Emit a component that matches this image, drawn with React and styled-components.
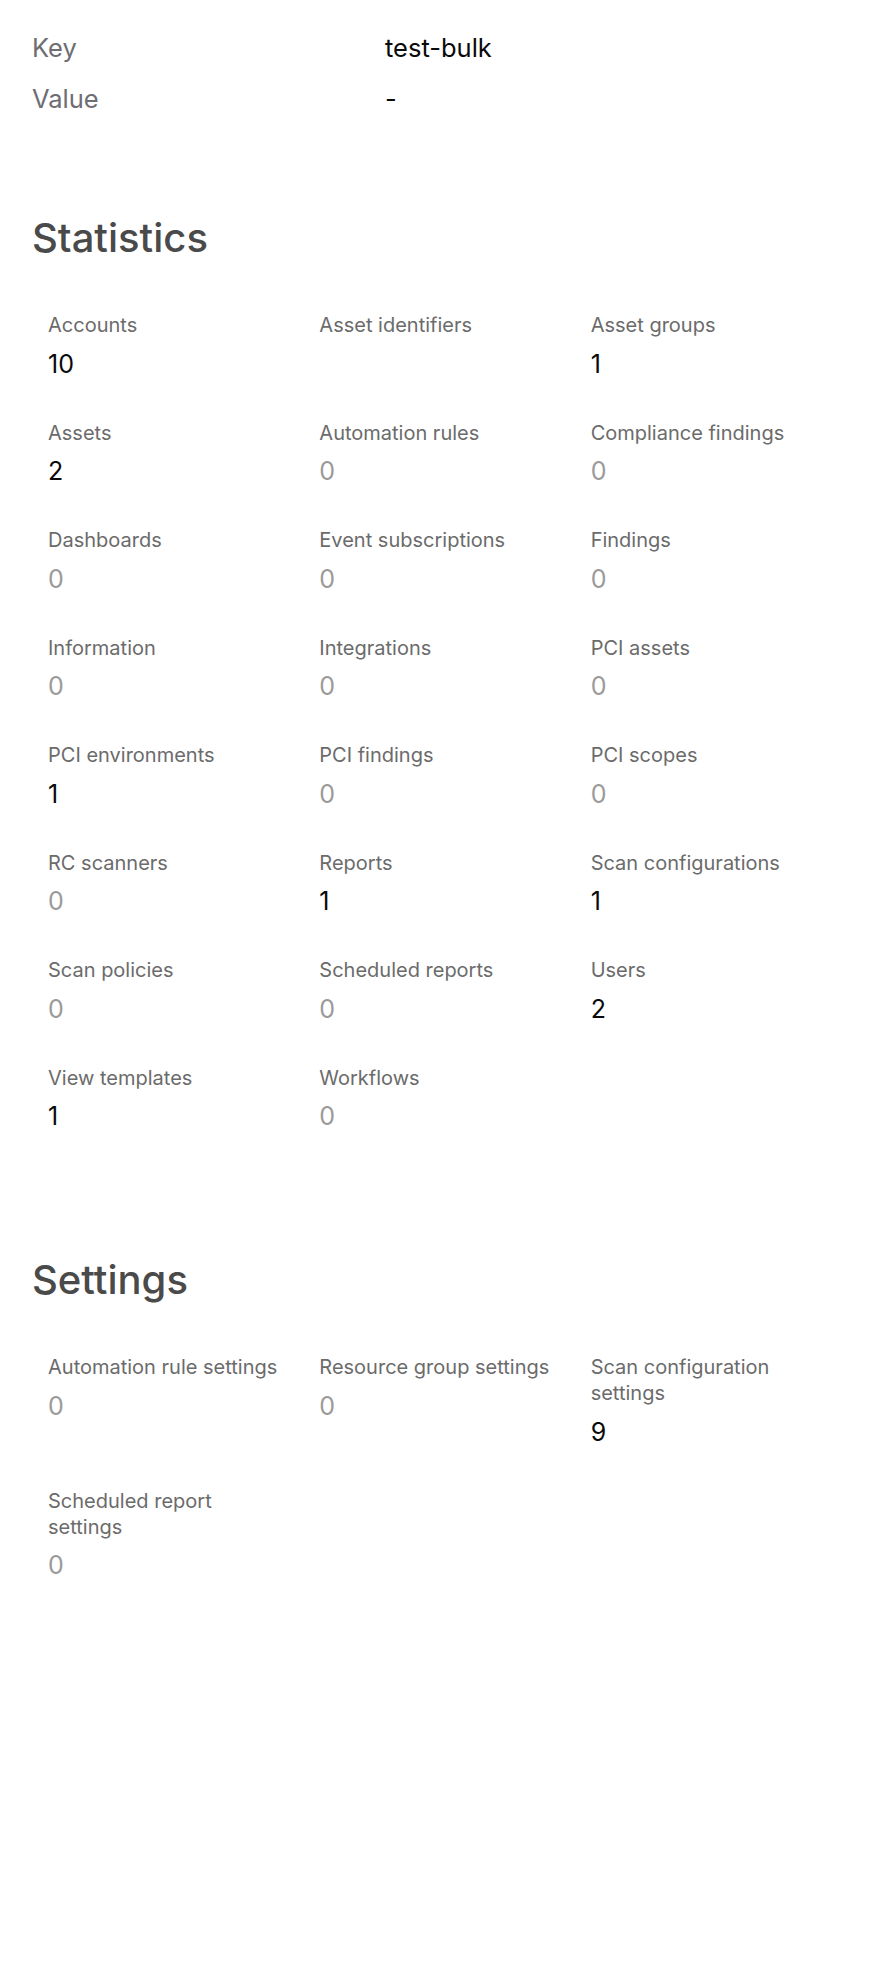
import React from "react";
import styled, { createGlobalStyle } from "styled-components";

const GlobalStyle = createGlobalStyle`
    html, body {
        margin: 0;
        padding: 0;
        background: #ffffff;
    }
    body {
        font-family: Inter, "Noto Sans", sans-serif;
        -webkit-font-smoothing: antialiased;
    }
`;

const details = [
    { key: "Key", value: "test-bulk" },
    { key: "Value", value: "-" },
];

const statistics = [
    { label: "Accounts", count: 10 },
    { label: "Asset identifiers", count: null },
    { label: "Asset groups", count: 1 },
    { label: "Assets", count: 2 },
    { label: "Automation rules", count: 0 },
    { label: "Compliance findings", count: 0 },
    { label: "Dashboards", count: 0 },
    { label: "Event subscriptions", count: 0 },
    { label: "Findings", count: 0 },
    { label: "Information", count: 0 },
    { label: "Integrations", count: 0 },
    { label: "PCI assets", count: 0 },
    { label: "PCI environments", count: 1 },
    { label: "PCI findings", count: 0 },
    { label: "PCI scopes", count: 0 },
    { label: "RC scanners", count: 0 },
    { label: "Reports", count: 1 },
    { label: "Scan configurations", count: 1 },
    { label: "Scan policies", count: 0 },
    { label: "Scheduled reports", count: 0 },
    { label: "Users", count: 2 },
    { label: "View templates", count: 1 },
    { label: "Workflows", count: 0 },
];

const settings = [
    { label: "Automation rule settings", count: 0 },
    { label: "Resource group settings", count: 0 },
    { label: "Scan configuration settings", count: 9 },
    { label: "Scheduled report settings", count: 0 },
];

const StatGrid = ({ items }) => (
    <Grid>
        {items.map((item) => (
            <Stat key={item.label}>
                <StatLabel>{item.label}</StatLabel>
                <StatValue $empty={item.count === 0}>
                    {item.count === null ? "" : item.count}
                </StatValue>
            </Stat>
        ))}
    </Grid>
);

const App = () => {
    return (
        <>
            <GlobalStyle />
            <Page>
                <DetailList>
                    {details.map((row) => (
                        <React.Fragment key={row.key}>
                            <DetailKey>{row.key}</DetailKey>
                            <DetailValue>{row.value}</DetailValue>
                        </React.Fragment>
                    ))}
                </DetailList>

                <Section>
                    <SectionTitle>Statistics</SectionTitle>
                    <StatGrid items={statistics} />
                </Section>

                <Section>
                    <SectionTitle>Settings</SectionTitle>
                    <StatGrid items={settings} />
                </Section>
            </Page>
        </>
    );
};

const Page = styled.main`
    padding: 30px 32px 32px;
    min-height: 1988px;
    box-sizing: border-box;
`;

const DetailList = styled.dl`
    display: grid;
    grid-template-columns: 353px 1fr;
    row-gap: 15px;
    margin: 0;
    font-size: 25.5px;
    line-height: 36px;
`;

const DetailKey = styled.dt`
    color: #6d6d72;
`;

const DetailValue = styled.dd`
    margin: 0;
    color: #0a0a0a;
`;

const Section = styled.section`
    margin-top: 96.5px;
    & + & {
        margin-top: 107.5px;
    }
`;

const SectionTitle = styled.h2`
    margin: 0 0 34.5px;
    font-size: 40px;
    line-height: 48px;
    font-weight: 500;
    color: #4a4a4a;
`;

const Grid = styled.div`
    display: grid;
    grid-template-columns: repeat(3, 1fr);
    row-gap: 8px;
`;

const Stat = styled.div`
    padding: 16px;
    min-width: 0;
`;

const StatLabel = styled.div`
    font-size: 20px;
    line-height: 26px;
    color: #6b6b6b;
`;

const StatValue = styled.div`
    margin-top: 9.5px;
    font-size: 25px;
    line-height: 32px;
    min-height: 32px;
    color: ${({ $empty }) => ($empty ? "#9a9a9a" : "#0a0a0a")};
`;

export default App;
